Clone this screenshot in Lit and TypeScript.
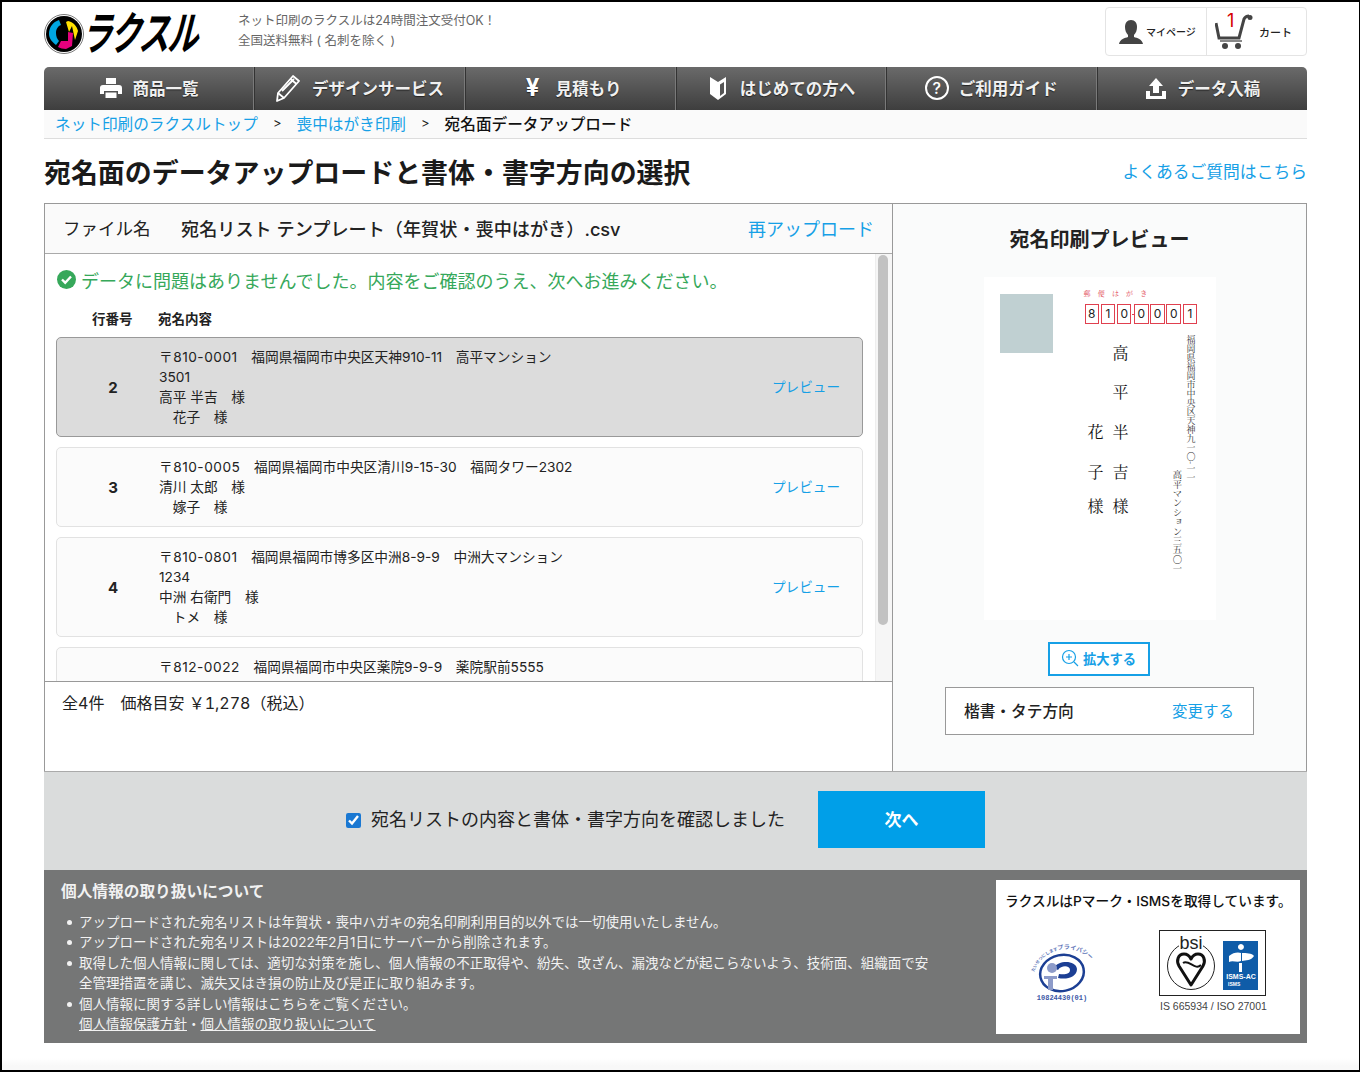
import { LitElement, css, html, svg } from "lit";
import { customElement } from "lit/decorators.js";

const rows = [
  {
    no: "2",
    active: true,
    post: "〒810-0001",
    lines: [
      "　福岡県福岡市中央区天神910-11　高平マンション",
      "3501",
      "高平 半吉　様",
      "　花子　様",
    ],
  },
  {
    no: "3",
    post: "〒810-0005",
    lines: [
      "　福岡県福岡市中央区清川9-15-30　福岡タワー2302",
      "清川 太郎　様",
      "　嫁子　様",
    ],
  },
  {
    no: "4",
    post: "〒810-0801",
    lines: [
      "　福岡県福岡市博多区中洲8-9-9　中洲大マンション",
      "1234",
      "中洲 右衛門　様",
      "　トメ　様",
    ],
  },
  // only the first line of this one shows above the fold
  {
    no: "",
    post: "〒812-0022",
    lines: ["　福岡県福岡市中央区薬院9-9-9　薬院駅前5555"],
  },
];

const navIcons = {
  printer: svg`<path fill="#fff" d="M7 2h10v6H7zM4 9h16a3 3 0 0 1 3 3v6h-4v-3H5v3H1v-6a3 3 0 0 1 3-3zM6.500 16.500h11V22h-11z"/>`,
  pencil: svg`<g fill="none" stroke="#fff" stroke-width="1.800" stroke-linejoin="round"><path d="M19 2l6 5L10 24l-7 3 1-8z"/><path d="M16.500 5l6 5M4 19l6 5M8 17L20 5"/></g>`,
  leaf: svg`<path fill="#fff" d="M4 1l8 5 8-5v17l-8 6-8-6z"/><path fill="#555" d="M14 8.500l4-2.500v11l-4 3z"/>`,
  upload: svg`<path fill="#fff" d="M12 2l7 8h-4v7H9v-7H5zM2 15h4v5h12v-5h4v8H2z"/>`,
};

const nav = [
  { label: "商品一覧", icon: navIcons.printer, w: 24 },
  { label: "デザインサービス", icon: navIcons.pencil, w: 28 },
  { label: "見積もり", yen: true },
  { label: "はじめての方へ", icon: navIcons.leaf, w: 24 },
  { label: "ご利用ガイド", help: true },
  { label: "データ入稿", icon: navIcons.upload, w: 24 },
];

const zip = ["8", "1", "0", "0", "0", "0", "1"];

@customElement("app-root")
export class AppRoot extends LitElement {
  static styles = css`
    :host {
      display: block;
      box-sizing: border-box;
      width: 1360px;
      height: 1072px;
      overflow: hidden;
      position: relative;
      border: solid #000;
      border-width: 2px 1px 2px 2px;
      background: linear-gradient(#fff 1056px, #f8f8f8 1064px);
      font-family: Inter, "Noto Sans CJK JP", "Liberation Sans", sans-serif;
      color: #222;
    }
    a {
      color: #16a0e6;
      text-decoration: none;
    }
    .page {
      width: 1263px;
      margin-left: 42px;
    }
    .header {
      display: flex;
      height: 65px;
      box-sizing: border-box;
    }
    .logo {
      width: 194px;
      display: flex;
      align-items: flex-start;
      padding-top: 10px;
      box-sizing: border-box;
    }
    .logo svg {
      margin-top: 2px;
      flex: none;
    }
    .logo-text {
      font-size: 46px;
      line-height: 42px;
      font-weight: 700;
      color: #000;
      letter-spacing: -2.600px;
      white-space: nowrap;
      margin-left: 6px;
      transform: skewX(-14deg) scaleX(0.67);
      transform-origin: left top;
    }
    .tagline {
      padding-top: 9px;
      font-size: 12.500px;
      line-height: 20px;
      color: #666;
      white-space: nowrap;
    }
    .account {
      margin: 5px 0 0 auto;
      width: 202px;
      height: 49px;
      box-sizing: border-box;
      display: flex;
      border: 1px solid #e4e4e4;
      border-radius: 4px;
      font-size: 10px;
      font-weight: 500;
      color: #222;
    }
    .account > div {
      display: flex;
      align-items: center;
      position: relative;
      white-space: nowrap;
    }
    .mypage {
      width: 101px;
      padding-left: 13px;
      box-sizing: border-box;
      gap: 3px;
      border-right: 1px solid #e4e4e4;
    }
    .cart {
      flex: 1;
      padding-left: 8px;
      gap: 4px;
      font-size: 11px;
    }
    .cart b {
      position: absolute;
      left: 20px;
      top: 3px;
      color: #d40000;
      font-size: 18px;
      line-height: 20px;
      font-weight: 400;
    }
    .nav {
      display: grid;
      grid-template-columns: 209px repeat(5, 1fr);
      height: 43px;
      border-radius: 5px 5px 0 0;
      background: linear-gradient(#6a6a6a, #3e3e3e);
      overflow: hidden;
    }
    .nav-item {
      display: flex;
      align-items: center;
      justify-content: center;
      gap: 10px;
      padding-bottom: 2px;
      color: #f0f0f0;
      font-size: 16.500px;
      font-weight: 700;
      white-space: nowrap;
      text-shadow: 0 1px 1px #222;
      border-left: 1px solid #7a7a7a;
      box-shadow: inset 1px 0 0 #333;
    }
    .nav-item:first-child {
      border-left: 0;
      box-shadow: none;
    }
    .yen {
      font-size: 24px;
      line-height: 24px;
      font-weight: 700;
      color: #fff;
      margin: 0 6px 0 8px;
    }
    .help {
      width: 20px;
      height: 20px;
      border: 2px solid #fff;
      border-radius: 50%;
      display: flex;
      align-items: center;
      justify-content: center;
      font-size: 16px;
      font-weight: 500;
      color: #fff;
      text-shadow: none;
    }
    .crumbs {
      height: 29px;
      box-sizing: border-box;
      padding: 0 0 2px 11px;
      display: flex;
      align-items: center;
      background: #fafafa;
      border-bottom: 1px solid #ddd;
      font-size: 15.650px;
      white-space: nowrap;
    }
    .crumbs span {
      margin: 0 15px;
      font-size: 13px;
    }
    .crumbs strong {
      font-weight: 500;
      color: #111;
    }
    .title-row {
      height: 64px;
      display: flex;
      align-items: center;
      justify-content: space-between;
    }
    h1 {
      margin: 0;
      font-size: 26.950px;
      font-weight: 700;
      color: #1a1a1a;
      white-space: nowrap;
    }
    .faq {
      font-size: 16.800px;
    }
    .panel {
      display: grid;
      grid-template-columns: 848px 1fr;
      border: 1px solid #999;
      border-bottom: 0;
    }
    .left {
      border-right: 1px solid #999;
      display: flex;
      flex-direction: column;
    }
    .file {
      height: 50px;
      box-sizing: border-box;
      border-bottom: 1px solid #aaa;
      background: #fafafa;
      display: flex;
      align-items: center;
      padding: 0 18px 2px;
      font-size: 17.500px;
      white-space: nowrap;
    }
    .file span {
      width: 118px;
    }
    .file strong {
      font-weight: 500;
      font-size: 18.150px;
    }
    .file a {
      margin-left: auto;
      font-size: 18px;
    }
    .scroller {
      height: 427px;
      display: flex;
      overflow: hidden;
      background: #fff;
    }
    .content {
      width: 830px;
      padding-left: 11px;
      box-sizing: border-box;
    }
    .track {
      width: 17px;
      background: #f6f6f6;
      border-left: 1px solid #eee;
      box-sizing: border-box;
      padding: 1px 2px 0 2px;
    }
    .thumb {
      height: 370px;
      width: 10px;
      border-radius: 5px;
      background: #c2c2c2;
    }
    .ok {
      height: 54px;
      box-sizing: border-box;
      display: flex;
      align-items: center;
      gap: 5px;
      padding: 0 0 3px 1px;
      color: #36a85a;
      font-size: 18px;
      white-space: nowrap;
    }
    .head {
      height: 22px;
      box-sizing: border-box;
      padding-bottom: 2px;
      display: flex;
      align-items: center;
      font-size: 13.500px;
      font-weight: 700;
      margin-bottom: 7px;
    }
    .head span:first-child {
      width: 66px;
      margin-left: 36px;
    }
    .row {
      width: 807px;
      box-sizing: border-box;
      display: flex;
      align-items: center;
      padding: 9px 22px 9px 0;
      margin-bottom: 10px;
      border: 1px solid #e2e2e2;
      border-radius: 5px;
      background: #fbfbfb;
      font-size: 13.700px;
      line-height: 20px;
    }
    .row.active {
      background: #dcdcdc;
      border-color: #999;
    }
    .no {
      width: 86px;
      margin: 0 3px 0 13px;
      padding-top: 1px;
      text-align: center;
      font-size: 15px;
      font-weight: 700;
    }
    .lines div,
    .lines span {
      white-space: pre;
    }
    .addr {
      display: flex;
    }
    .post {
      letter-spacing: 0.500px;
    }
    .row a {
      margin-left: auto;
      font-size: 13.600px;
    }
    .total {
      height: 90px;
      box-sizing: border-box;
      border-top: 1px solid #999;
      padding: 8px 0 0 17px;
      background: #fff;
      font-size: 16px;
      line-height: 26px;
      white-space: pre;
      font-variant-numeric: tabular-nums;
    }
    .right {
      background: #fafbfb;
      display: flex;
      flex-direction: column;
      align-items: center;
    }
    h2 {
      margin: 0;
      height: 73px;
      box-sizing: border-box;
      padding-bottom: 4px;
      display: flex;
      align-items: center;
      font-size: 20px;
      font-weight: 700;
      white-space: nowrap;
    }
    .card {
      position: relative;
      width: 232px;
      height: 343px;
      background: #fff;
      overflow: hidden;
      font-family: "Noto Serif CJK JP", "Noto Sans CJK JP", serif;
    }
    .stamp {
      position: absolute;
      left: 16px;
      top: 17px;
      width: 53px;
      height: 59px;
      background: #c0d0d2;
    }
    .post-label {
      position: absolute;
      left: 100px;
      top: 11px;
      font-size: 7px;
      line-height: 10px;
      letter-spacing: 7.200px;
      color: #e0404f;
      white-space: nowrap;
    }
    .zip {
      position: absolute;
      left: 101px;
      top: 27px;
      display: flex;
      gap: 1.600px;
    }
    .zip i {
      position: relative;
      width: 14.600px;
      height: 20px;
      box-sizing: border-box;
      border: 1px solid #e0404f;
      font-style: normal;
      font-size: 12px;
      line-height: 18px;
      text-align: center;
      color: #222;
      font-family: Inter, "Liberation Sans", sans-serif;
    }
    .zip i:nth-child(3) {
      margin-right: 1px;
    }
    .zip i:nth-child(3)::after {
      content: "";
      position: absolute;
      left: 14px;
      top: 9px;
      width: 3px;
      height: 1px;
      background: #e0404f;
    }
    .name {
      position: absolute;
      font-size: 16px;
      line-height: 16px;
      color: #111;
    }
    .vert {
      position: absolute;
      writing-mode: vertical-rl;
      font-size: 9px;
      line-height: 10px;
      color: #333;
      white-space: nowrap;
    }
    .zoom {
      margin: 22px 2px 0 0;
      width: 102px;
      height: 34px;
      box-sizing: border-box;
      border: 2px solid #16a0e6;
      background: #fff;
      color: #16a0e6;
      display: flex;
      align-items: center;
      justify-content: center;
      gap: 4px;
      padding-bottom: 2px;
      font-size: 13.300px;
      font-weight: 700;
    }
    .style-box {
      margin-top: 11px;
      width: 309px;
      height: 48px;
      box-sizing: border-box;
      border: 1px solid #999;
      background: #fff;
      display: flex;
      align-items: center;
      justify-content: space-between;
      padding: 0 19px 2px 18px;
      font-size: 15.700px;
      font-weight: 500;
    }
    .style-box a {
      font-size: 15.500px;
      font-weight: 400;
    }
    .confirm {
      height: 99px;
      box-sizing: border-box;
      border-top: 1px solid #aaa;
      background: #dadcdc;
      display: flex;
      align-items: center;
      padding: 0 0 4px 302px;
      font-size: 18px;
      white-space: nowrap;
    }
    .confirm input {
      width: 15px;
      height: 15px;
      margin: 2px 10px 0 0;
      accent-color: #1a78d2;
    }
    .confirm span {
      padding-bottom: 3px;
    }
    .next {
      margin-left: 33px;
      width: 167px;
      height: 57px;
      box-sizing: border-box;
      padding-bottom: 2px;
      display: flex;
      align-items: center;
      justify-content: center;
      background: #009fe8;
      color: #fff;
      font-size: 17px;
      font-weight: 700;
    }
    .info {
      height: 173px;
      box-sizing: border-box;
      background: #757676;
      display: flex;
      justify-content: space-between;
      padding: 10px 7px 9px 16px;
      color: #f2f2f2;
    }
    h3 {
      margin: 1px 0 9px 1px;
      font-size: 15.700px;
      line-height: 22px;
      font-weight: 700;
    }
    ul {
      list-style: none;
      margin: 0;
      padding: 0 0 0 19px;
      font-size: 13.500px;
      line-height: 20.400px;
      white-space: nowrap;
    }
    li {
      position: relative;
    }
    li::before {
      content: "";
      position: absolute;
      left: -12px;
      top: 8px;
      width: 5px;
      height: 5px;
      border-radius: 50%;
      background: #f2f2f2;
    }
    ul a {
      color: #f2f2f2;
      text-decoration: underline;
    }
    .marks {
      width: 304px;
      height: 154px;
      background: #fff;
      color: #111;
      box-sizing: border-box;
      padding: 11px 0 0 9px;
    }
    .marks h4 {
      margin: 0;
      font-size: 13.700px;
      line-height: 20px;
      font-weight: 500;
      white-space: nowrap;
    }
    .mark-row {
      display: flex;
      margin-top: 19px;
      align-items: flex-start;
    }
    .pmark {
      margin: 10px 0 0 27px;
      flex: none;
      overflow: visible;
    }
    .bsi {
      margin-left: 67px;
      flex: none;
    }
    .bsi-box {
      display: block;
    }
    .bsi p {
      margin: 3px 0 0 1px;
      font-size: 10.500px;
      line-height: 14px;
      color: #444;
      white-space: nowrap;
      font-family: "Liberation Sans", sans-serif;
    }
  `;

  renderLogo() {
    return html`<div class="logo">
      <svg width="40" height="40" viewBox="0 0 40 40">
        <circle cx="20" cy="20" r="19.500" fill="#fff" stroke="#777" />
        <circle cx="20" cy="20" r="18" fill="#000" />
        <path fill="#00a6e0" d="M5 20c0-7 4-12 10-14l2 5c-3 1-5 4-5 8 0 3 1 6 3 8l-3 4c-4-3-7-7-7-11z" />
        <path fill="#e6007e" d="M14 33l3-6 7 0 0-9 5 1-1 13-6 3c-3 0-6-1-8-2z" />
        <path fill="#ffe100" d="M24 7c5 1 9 5 10 10l-3 9-3-14-3 6-3-10z" />
      </svg>
      <div class="logo-text">ラクスル</div>
    </div>`;
  }

  renderNav() {
    return html`<nav class="nav">
      ${nav.map(
        (n) => html`<div class="nav-item">
          ${n.yen
            ? html`<span class="yen">¥</span>`
            : n.help
              ? html`<span class="help">?</span>`
              : html`<svg width=${n.w ?? 24} height=${n.w ?? 24} viewBox="0 0 ${n.w ?? 24} ${n.w ?? 24}">${n.icon}</svg>`}
          <span>${n.label}</span>
        </div>`
      )}
    </nav>`;
  }

  renderCard() {
    return html`<div class="card">
      <div class="stamp"></div>
      <div class="post-label">郵便はがき</div>
      <div class="zip">${zip.map((d) => html`<i>${d}</i>`)}</div>
      ${[
        ["高", 129, 68],
        ["平", 129, 107],
        ["半", 129, 147],
        ["吉", 129, 187],
        ["様", 129, 221],
        ["花", 104, 147],
        ["子", 104, 187],
        ["様", 104, 221],
      ].map(
        ([c, x, y]) => html`<div class="name" style="left:${x}px;top:${y}px">${c}</div>`
      )}
      <div class="vert" style="left:202px;top:58px">福岡県福岡市中央区天神九一〇-一一</div>
      <div class="vert" style="left:189px;top:193px;font-size:9.400px">高平マンション三五〇一</div>
    </div>`;
  }

  renderMarks() {
    return html`<div class="marks">
      <h4>ラクスルはPマーク・ISMSを取得しています。</h4>
      <div class="mark-row">
        <svg class="pmark" width="60" height="62" viewBox="0 0 60 62">
          <defs><path id="arc" d="M2 32A34 34 0 0 1 59 20" /></defs>
          <text font-size="4.200" fill="#5c74b8" font-weight="700"><textPath href="#arc">たいせつにします<tspan font-size="6">プライバシー</tspan></textPath></text>
          <ellipse cx="30" cy="33" rx="22" ry="18" fill="none" stroke="#1c3f94" stroke-width="2.500" transform="rotate(-12 30 33)" />
          <path fill="#1c3f94" d="M22 28c4-8 22-8 23 1 0 8-10 11-19 9l1-4c6 1 11 0 11-4 0-5-9-5-12 0z" />
          <circle cx="20" cy="28" r="5" fill="#8d9bc9" />
          <path fill="#8d9bc9" d="M12 36h13v3h-4v11h-5V39h-4z" />
          <text x="30" y="60" text-anchor="middle" font-size="7" font-weight="700" fill="#3b57a6" font-family="Liberation Mono, monospace">10824430(01)</text>
        </svg>
        <div class="bsi">
          <svg class="bsi-box" width="107" height="66" viewBox="0 0 107 66">
            <rect x=".5" y=".5" width="106" height="65" fill="#fff" stroke="#222" />
            <circle cx="32" cy="36" r="23.500" fill="#fff" stroke="#222" />
            <rect x="20" y="4" width="24" height="16" fill="#fff" />
            <text x="32" y="19" text-anchor="middle" font-size="18" fill="#222" font-family="Liberation Sans, sans-serif">bsi</text>
            <path fill="none" stroke="#111" stroke-width="3" stroke-linejoin="round" d="M32 55L20 36c-3-5-1-12 5-12 4 0 6 3 7 5 1-2 3-5 7-5 6 0 8 7 5 12z" />
            <path fill="none" stroke="#111" stroke-width="2" d="M24 33c6-4 12 8 18 2" />
            <rect x="64" y="11" width="35" height="49" fill="#0f5ca8" />
            <path fill="#fff" d="M82 14a3 3 0 1 1-.100 0zM70 26c4-4 10-4 12-3v8c-4 2-8-1-12 1zM83 23c4 0 10 0 12 3-3 5-8 4-12 5zM80 33h3v9h-3z" />
            <text x="82" y="49" text-anchor="middle" font-size="7" font-weight="700" fill="#fff" font-family="Liberation Sans, sans-serif">ISMS-AC</text>
            <text x="69" y="56" font-size="5" font-weight="700" fill="#fff" font-family="Liberation Sans, sans-serif">ISMS</text>
          </svg>
          <p>IS 665934 / ISO 27001</p>
        </div>
      </div>
    </div>`;
  }

  render() {
    return html`<div class="page">
      <header class="header">
        ${this.renderLogo()}
        <div class="tagline">ネット印刷のラクスルは24時間注文受付OK！<br />全国送料無料 ( 名刺を除く )</div>
        <div class="account">
          <div class="mypage">
            <svg width="24" height="24" viewBox="0 0 24 24"><path fill="#444" d="M12 0c4 0 6 3 6 7 0 3-1 6-3 8v2c3 1 8 2 9 7H0c1-5 6-6 9-7v-2C7 13 6 10 6 7c0-4 2-7 6-7z" /></svg>
            マイページ
          </div>
          <div class="cart">
            <svg width="40" height="36" viewBox="0 0 40 36">
              <path fill="none" stroke="#444" stroke-width="3" d="M1 9l3 15h20l5-19c1-2 3-3 5-3" />
              <circle cx="35" cy="3.500" r="2.500" fill="#444" />
              <path fill="none" stroke="#888" stroke-width="2" d="M5 27h22" />
              <circle cx="10" cy="32" r="3" fill="#444" />
              <circle cx="23" cy="32" r="3" fill="#444" />
            </svg>
            <b>1</b>
            カート
          </div>
        </div>
      </header>
      ${this.renderNav()}
      <div class="crumbs">
        <a href="#">ネット印刷のラクスルトップ</a><span>&gt;</span><a href="#">喪中はがき印刷</a><span>&gt;</span><strong>宛名面データアップロード</strong>
      </div>
      <div class="title-row">
        <h1>宛名面のデータアップロードと書体・書字方向の選択</h1>
        <a class="faq" href="#">よくあるご質問はこちら</a>
      </div>
      <section class="panel">
        <div class="left">
          <div class="file">
            <span>ファイル名</span><strong>宛名リスト テンプレート（年賀状・喪中はがき）.csv</strong>
            <a href="#">再アップロード</a>
          </div>
          <div class="scroller">
            <div class="content">
              <div class="ok">
                <svg width="19" height="19" viewBox="0 0 19 19"><circle cx="9.500" cy="9.500" r="9.500" fill="#36a85a" /><path fill="none" stroke="#fff" stroke-width="2.400" d="M5 9.500l3.200 3.200L14 6.500" /></svg>
                データに問題はありませんでした。内容をご確認のうえ、次へお進みください。
              </div>
              <div class="head"><span>行番号</span><span>宛名内容</span></div>
              ${rows.map(
                (r) => html`<div class="row ${r.active ? "active" : ""}">
                  <div class="no">${r.no}</div>
                  <div class="lines">
                    <div class="addr"><span class="post">${r.post}</span><span>${r.lines[0]}</span></div>
                    ${r.lines.slice(1).map((l) => html`<div>${l}</div>`)}
                  </div>
                  ${r.no ? html`<a href="#">プレビュー</a>` : ""}
                </div>`
              )}
            </div>
            <div class="track"><div class="thumb"></div></div>
          </div>
          <div class="total">全4件　価格目安 ￥1,278（税込）</div>
        </div>
        <div class="right">
          <h2>宛名印刷プレビュー</h2>
          ${this.renderCard()}
          <div class="zoom">
            <svg width="18" height="18" viewBox="0 0 18 18" fill="none" stroke="#16a0e6" stroke-width="1.200"><circle cx="8" cy="8" r="6.500" /><path d="M8 5v6M5 8h6M13 13l4 4" /></svg>
            拡大する
          </div>
          <div class="style-box">楷書・タテ方向<a href="#">変更する</a></div>
        </div>
      </section>
      <div class="confirm">
        <input type="checkbox" checked />
        <span>宛名リストの内容と書体・書字方向を確認しました</span>
        <div class="next">次へ</div>
      </div>
      <section class="info">
        <div>
          <h3>個人情報の取り扱いについて</h3>
          <ul>
            <li>アップロードされた宛名リストは年賀状・喪中ハガキの宛名印刷利用目的以外では一切使用いたしません。</li>
            <li>アップロードされた宛名リストは2022年2月1日にサーバーから削除されます。</li>
            <li>取得した個人情報に関しては、適切な対策を施し、個人情報の不正取得や、紛失、改ざん、漏洩などが起こらないよう、技術面、組織面で安<br />全管理措置を講じ、滅失又はき損の防止及び是正に取り組みます。</li>
            <li>個人情報に関する詳しい情報はこちらをご覧ください。<br /><a href="#">個人情報保護方針</a>・<a href="#">個人情報の取り扱いについて</a></li>
          </ul>
        </div>
        ${this.renderMarks()}
      </section>
    </div>`;
  }
}
